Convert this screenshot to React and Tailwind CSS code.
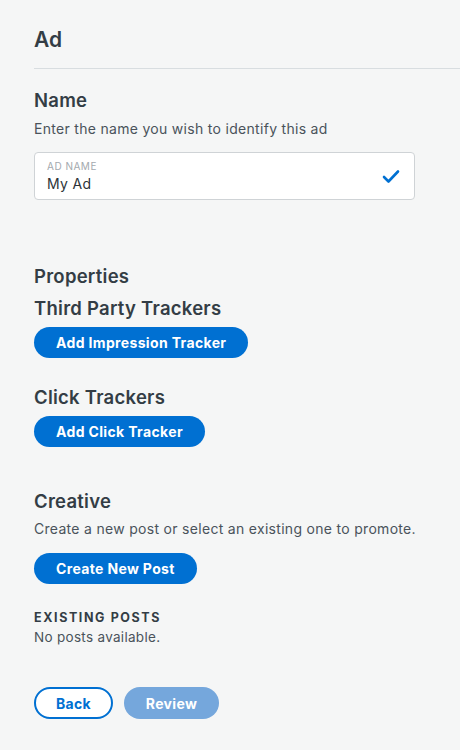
// Ad editor panel: name, trackers, creative, and the back/review footer.
const FONT = { fontFamily: "Inter, 'Noto Sans', 'Liberation Sans', sans-serif" };

function Pill({ children, className = "" }) {
  return (
    <button
      type="button"
      className={`h-[31px] rounded-full bg-[#0070d2] px-[22px] text-[14px] font-bold tracking-[0.35px] text-white ${className}`}
    >
      {children}
    </button>
  );
}

function Heading({ children, className = "" }) {
  return (
    <h2 className={`text-[18.5px] font-semibold leading-[24px] tracking-[0.25px] text-[#333d45] ${className}`}>
      {children}
    </h2>
  );
}

export default function App() {
  return (
    <div className="min-h-[750px] w-[460px] bg-[#f5f6f6] pl-[34px] pt-[26px]" style={FONT}>
      <h1 className="text-[21px] font-semibold leading-[28px] text-[#333d45]">Ad</h1>
      <div className="mt-[14px] h-px bg-[#d8dde0]" />

      {/* name */}
      <Heading className="mt-[19px]">Name</Heading>
      <p className="mt-[7px] text-[14px] leading-[20px] tracking-[0.3px] text-[#4a535b]">
        Enter the name you wish to identify this ad
      </p>
      <div className="mt-[13px] flex h-[48px] w-[381px] items-center rounded-[4px] border border-[#cfd3d6] bg-white pl-[12px] pr-[14px]">
        <div className="flex-1">
          <div className="text-[10px] uppercase leading-[12px] tracking-[0.5px] text-[#a3a9ae]">Ad Name</div>
          <div className="mt-[3px] text-[14px] leading-[18px] tracking-[0.3px] text-[#2c3338]">My Ad</div>
        </div>
        <svg width="18" height="15" viewBox="0 0 18 15" fill="none">
          <path d="M2 8l4.5 4.5L16 2.5" stroke="#0070d2" strokeWidth="2.6" strokeLinecap="round" strokeLinejoin="round" />
        </svg>
      </div>

      {/* properties */}
      <Heading className="mt-[64px]">Properties</Heading>
      <Heading className="mt-[8px]">Third Party Trackers</Heading>
      <Pill className="mt-[7px]">Add Impression Tracker</Pill>
      <Heading className="mt-[27px]">Click Trackers</Heading>
      <Pill className="mt-[7px]">Add Click Tracker</Pill>

      {/* creative */}
      <Heading className="mt-[42px]">Creative</Heading>
      <p className="mt-[6px] text-[14px] leading-[20px] tracking-[0.3px] text-[#4a535b]">
        Create a new post or select an existing one to promote.
      </p>
      <Pill className="mt-[14px]">Create New Post</Pill>
      <div className="mt-[26px] text-[12.5px] font-bold uppercase leading-[16px] tracking-[1.6px] text-[#333d45]">
        Existing Posts
      </div>
      <p className="mt-[1px] text-[13.5px] leading-[20px] tracking-[0.3px] text-[#4a535b]">No posts available.</p>

      <div className="mt-[40px] flex gap-[11px]">
        <button
          type="button"
          className="h-[32px] w-[79px] rounded-full border-2 border-[#0070d2] bg-white text-[14px] font-bold tracking-[0.35px] text-[#0070d2]"
        >
          Back
        </button>
        <button
          type="button"
          className="h-[32px] w-[95px] rounded-full bg-[#75a7dc] text-[14px] font-bold tracking-[0.35px] text-white"
        >
          Review
        </button>
      </div>
    </div>
  );
}
